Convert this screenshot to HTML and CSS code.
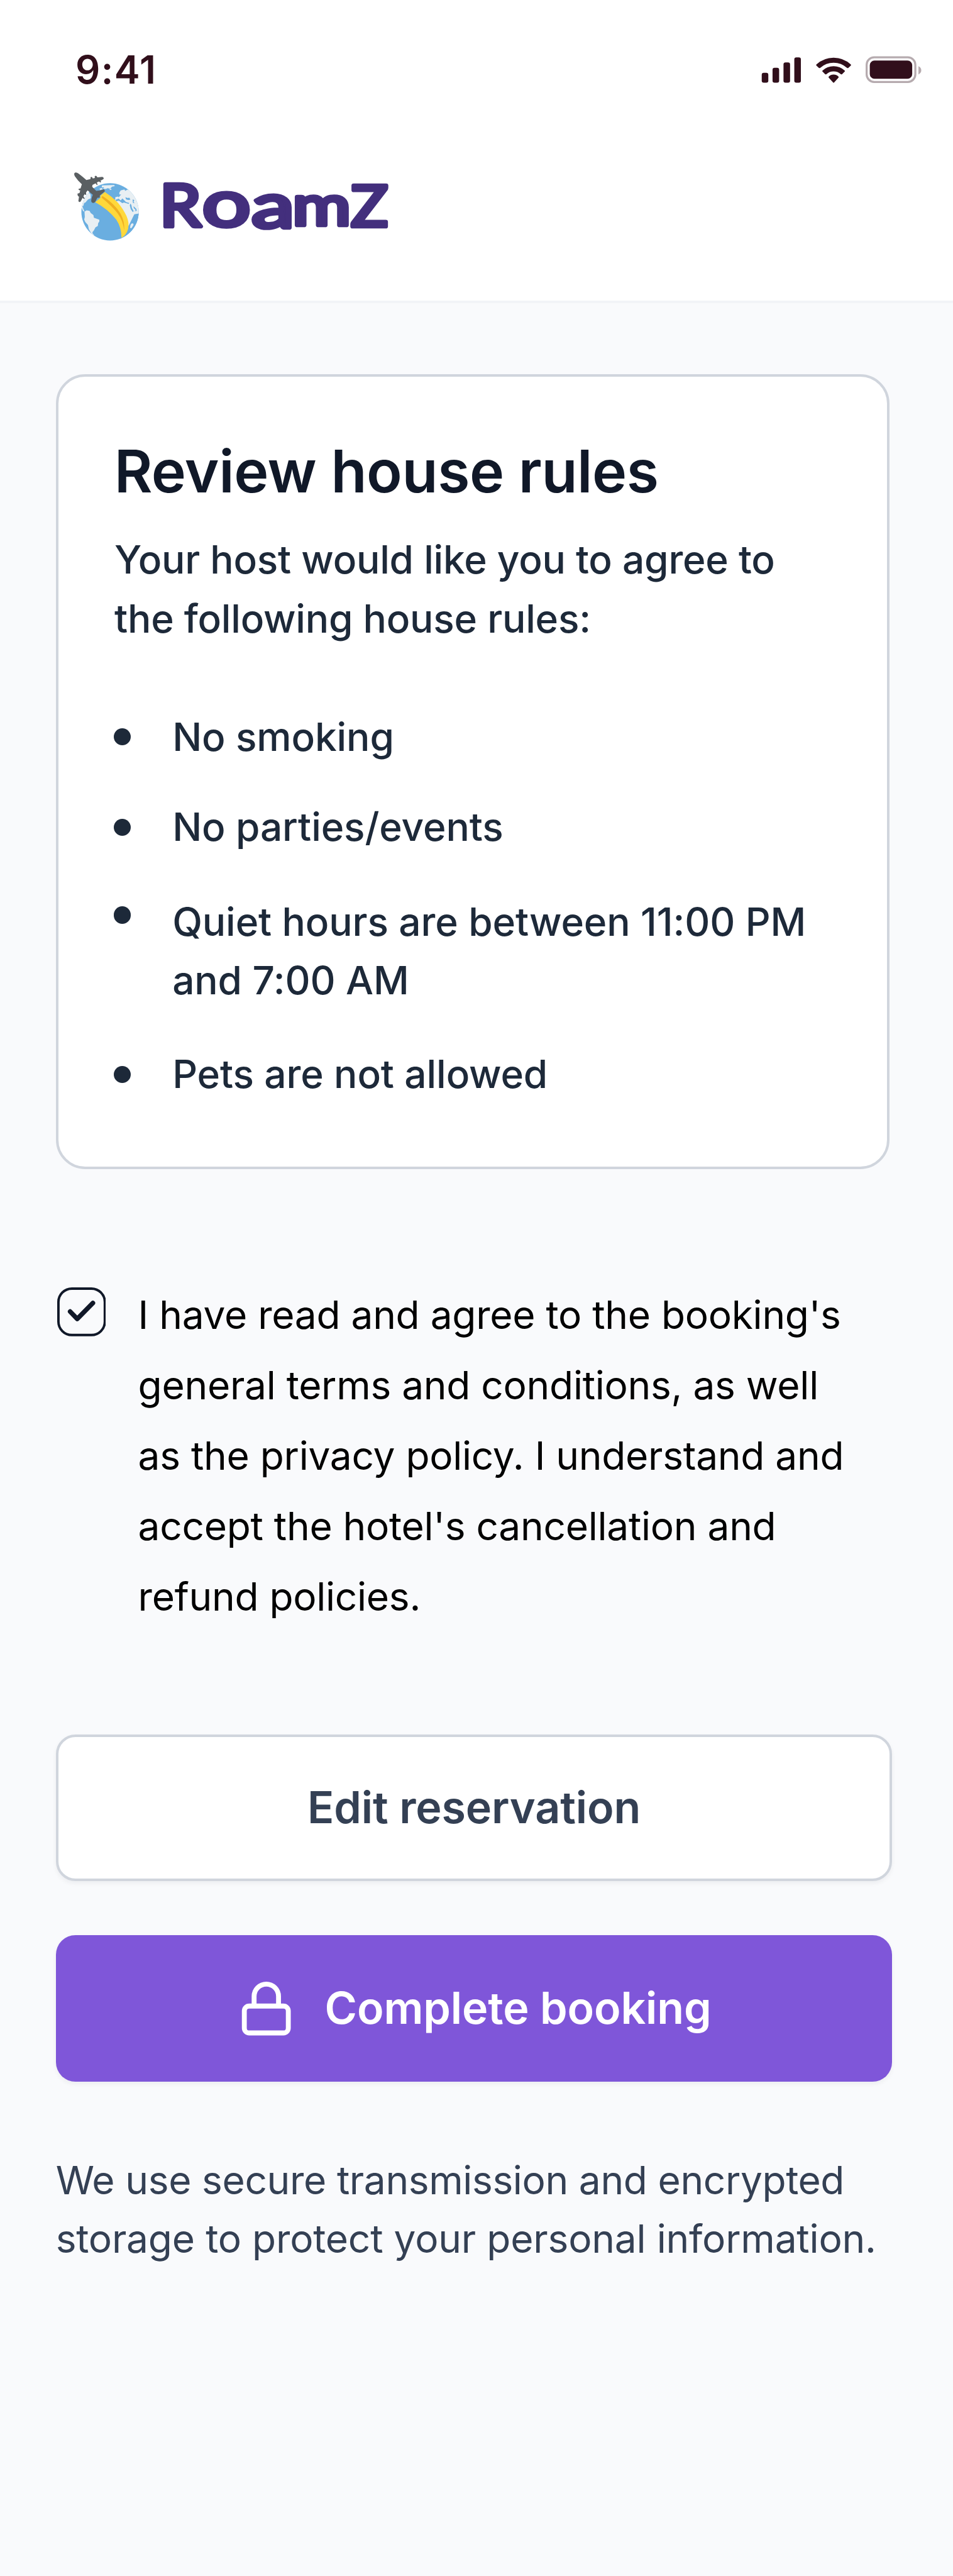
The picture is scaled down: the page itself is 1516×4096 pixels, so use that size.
FILE: index.html
```
<!DOCTYPE html>
<html lang="en">
<head>
<meta charset="utf-8">
<title>RoamZ – Review house rules</title>
<link rel="stylesheet" href="styles.css">
</head>
<body>
<header class="header">
  <div class="status">
    <span class="status-time">9:41</span>
    <svg class="status-icons" viewBox="180 110 1030 190" aria-hidden="true">
      <g fill="#310f1b">
        <rect x="183" y="225" width="42" height="63" rx="13"/>
        <rect x="252" y="193" width="42" height="95" rx="13"/>
        <rect x="322" y="159" width="42" height="129" rx="13"/>
        <rect x="391" y="127" width="42" height="161" rx="13"/>
        <path d="M532 172Q579 129 642 129T752 172Q755 176 752 179L736 194Q732 197 728 194Q691 161 642 161T556 194Q552 197 548 194L532 179Q529 176 532 172Z"/>
        <path d="M571 211Q601 183 642 183T713 211Q716 214 713 217L696 234Q692 237 688 234Q668 216 642 216T596 234Q592 237 588 234L571 217Q568 214 571 211Z"/>
        <path d="M611 249Q624 236 642 236T673 249Q676 253 673 256L645 287Q642 290 639 287L611 256Q608 253 611 249Z"/>
        <rect x="873" y="147" width="271" height="116" rx="30"/>
      </g>
      <rect x="853" y="126.500" width="311" height="157" rx="48" fill="none" stroke="#b6abaf" stroke-width="13"/>
      <path d="M1184 183Q1202 192 1202 209T1184 236Z" fill="#b6abaf"/>
    </svg>
  </div>
  <div class="brand">
    <svg class="brand-globe" viewBox="0 0 510 510" aria-hidden="true">
      <defs><clipPath id="globe"><circle cx="269" cy="300" r="183"/></clipPath></defs>
      <circle cx="269" cy="300" r="183" fill="#6aaee0"/>
      <g clip-path="url(#globe)" fill="#e8eff3">
        <path d="M218 131L296 129L299 136L282 139L270 152L252 149L243 154L225 153L231 143L216 144ZM265 154L276 152L279 158L268 160ZM202 151L216 148L224 156L205 160Z"/>
        <path d="M86 270L90 225L118 160L145 190L146 214L128 222L112 241L104 244L98 263L92 265L101 287L106 298L97 296Z"/>
        <path d="M106 299L119 291L138 294L146 308L163 321L166 338L200 350L201 361L193 373L191 390L176 399L165 420L157 429L158 444L150 438L134 412L128 384L111 365L104 349L108 333Z"/>
        <path d="M154 438L160 440L170 452L160 449Z"/>
        <path d="M328 179L337 163L361 157L366 167L380 158L400 165L430 195L460 260L455 310L432 318L421 326L402 370L388 392L350 300L280 240L288 227L302 222L303 207L321 203L326 213L338 203L348 204L364 226L371 213L391 214L397 223L385 228L396 241L389 248L345 234L326 224L306 229L340 190L329 190Z"/>
      </g>
      <g clip-path="url(#globe)" fill="#6aaee0">
        <path d="M303 224L324 216L337 228L348 215L371 238L392 244L388 250L358 241L347 245L326 230L307 233Z"/>
        <path d="M367 207L379 212L393 211L399 223L385 225L371 221ZM413 221L424 226L419 236L425 246L415 243Z"/>
        <path d="M398 248L405 256L409 276L420 296L414 302L401 283L395 260ZM419 264L437 282L440 294L425 296L433 289L420 276Z"/>
        <path d="M424 316L460 310L450 380L380 470L330 475L388 388L402 360Z"/>
      </g>
      <path d="M404 376L416 373L419 383L406 404L397 403L399 388Z" fill="#e8eff3"/>
      <path d="M236 174L207 198L208 211L174 239Q254 282 309 350Q342 400 342 465L329 473Q373 454 384 410C398 355 365 299 319 242Q281 203 236 174Z" fill="#ffd83b"/>
      <path d="M216 205Q219 197 228 204Q299 251 336 312Q364 363 359 418Q352 357 319 312Q281 263 216 211Z" fill="#efaf22"/>
      <path d="M41 54Q50 43 68 56Q93 75 118 97L144 91L145 79Q154 74 159 87L172 84L171 73Q181 65 188 80L219 77Q231 81 228 90L214 99L209 98L211 112Q204 114 200 106L185 112L190 130Q181 128 177 118L157 128L155 140L181 167Q208 165 228 156Q239 162 234 172L204 196L203 210L188 211L174 238Q160 249 150 237Q146 222 159 192L126 164L116 177L117 193Q108 191 107 188L99 201L108 217Q99 219 94 211L82 234Q71 242 67 231L71 204Q59 199 62 184L74 181L79 163Q67 163 68 153L81 150L89 124Q63 101 45 74Q38 63 41 54Z" fill="#5a5f62"/>
    </svg>
    <svg class="brand-name" viewBox="0 0 510 140" role="img" aria-label="RoamZ">
      <text class="brand-text" y="111.500"><tspan x="9.500" font-size="125" textLength="88" lengthAdjust="spacingAndGlyphs">R</tspan><tspan x="100" font-size="137" textLength="103" lengthAdjust="spacingAndGlyphs">o</tspan><tspan x="205" y="114" font-size="133" textLength="91" lengthAdjust="spacingAndGlyphs">a</tspan><tspan x="292" y="109" font-size="119" textLength="124" lengthAdjust="spacingAndGlyphs">m</tspan><tspan x="416.500" y="111.500" font-size="122" textLength="79" lengthAdjust="spacingAndGlyphs">Z</tspan></text>
    </svg>
  </div>
</header>

<main class="main">
  <section class="card">
    <h1 class="card-title">Review house rules</h1>
    <p class="card-intro">Your host would like you to agree to<br>the following house rules:</p>
    <ul class="rules">
      <li class="rule"><span class="dot"></span><span>No smoking</span></li>
      <li class="rule"><span class="dot"></span><span>No parties/events</span></li>
      <li class="rule rule-long"><span class="dot"></span><span>Quiet hours are between 11:00 PM<br>and 7:00 AM</span></li>
      <li class="rule"><span class="dot"></span><span>Pets are not allowed</span></li>
    </ul>
  </section>

  <div class="consent">
    <svg class="checkbox" viewBox="0 0 20 20" fill="none" stroke="#101828" aria-hidden="true">
      <rect x=".5" y=".5" width="19" height="19" rx="5.500"/>
      <path d="M5.300 9.900L8.200 12.900L14.600 6.400" stroke-width="1.900" stroke-linecap="round" stroke-linejoin="round"/>
    </svg>
    <p class="consent-text">I have read and agree to the booking's<br>general terms and conditions, as well<br>as the privacy policy. I understand and<br>accept the hotel's cancellation and<br>refund policies.</p>
  </div>

  <div class="actions">
    <button class="button button-secondary">Edit reservation</button>
    <button class="button button-primary">
      <svg class="lock" viewBox="0 0 24 24" fill="none" stroke="#fff" stroke-width="2" aria-hidden="true">
        <rect x="3" y="11" width="18" height="11" rx="2"/>
        <path d="M7 11V7a5 5 0 0 1 10 0v4"/>
      </svg>
      <span>Complete booking</span>
    </button>
  </div>

  <p class="note"><span class="note-lead">We use secure transmission and encrypted</span><br>storage to protect your personal information.</p>
</main>
</body>
</html>
```
FILE: styles.css
```
/* 1rem is one design pixel of the 390px-wide layout */
html {
  font-size: 3.88718px;
}

* {
  box-sizing: border-box;
}

body {
  margin: 0;
  min-height: 4096px;
  background: #f9fafc;
  color: #1d2939;
  font-family: Inter, "Liberation Sans", sans-serif;
  font-size: 16rem;
  font-optical-sizing: none;
  line-height: 24rem;
}

h1, p, ul {
  margin: 0;
  padding: 0;
}

.header {
  height: 124rem;
  background: #fff;
  border-bottom: 4px solid #f2f4f7;
}

.status {
  display: flex;
  justify-content: space-between;
  padding: 16.7rem 12.350rem 0 30.900rem;
  height: 67.300rem;
}

.status-time {
  color: #310f1b;
  font-size: 15.800rem;
  font-weight: 600;
  letter-spacing: .350rem;
  line-height: 24rem;
}

.status-icons {
  width: 66rem;
  height: 12.200rem;
  margin-top: 5.700rem;
}

.brand {
  display: flex;
  padding-left: 27.900rem;
}

.brand-globe {
  width: 32.700rem;
  height: 32.700rem;
}

.brand-name {
  width: 98.080rem;
  height: 26.920rem;
  margin: 3.850rem 0 0 2.880rem;
  overflow: visible;
}

.brand-text {
  fill: #432f7d;
  stroke: #432f7d;
  stroke-width: 9px;
  stroke-linejoin: round;
  font-family: Lato, Inter, sans-serif;
  font-weight: 400;
}

.main {
  padding: 29rem 25rem 0 23rem;
}

.card {
  width: 341rem;
  height: 325.200rem;
  padding: 23rem;
  background: #fff;
  border: 4px solid #d0d5dd;
  border-radius: 12rem;
}

.card-title {
  margin-left: -.300rem;
  color: #101828;
  font-size: 24rem;
  font-weight: 600;
  letter-spacing: -.110rem;
  line-height: 32rem;
}

.card-intro {
  margin: 7.900rem 0 0 -.200rem;
  font-weight: 500;
  letter-spacing: -.060rem;
}

.rules {
  display: grid;
  gap: 13rem;
  margin-top: 24.400rem;
  list-style: none;
  font-weight: 500;
  letter-spacing: -.030rem;
}

.rule {
  display: flex;
  gap: 16.900rem;
}

.rule-long {
  margin: 1.600rem 0 1.500rem;
}

.dot {
  flex: none;
  width: 7rem;
  height: 7rem;
  margin: 8.600rem 0 0 -.400rem;
  border-radius: 50%;
  background: #1d2939;
}

.rule-long .dot {
  margin-top: 5.900rem;
}

.consent {
  display: flex;
  gap: 13.200rem;
  margin-top: 45.400rem;
  padding-left: .3rem;
}

.checkbox {
  flex: none;
  width: 20rem;
  height: 20rem;
  margin-top: 3.100rem;
}

.consent-text {
  color: #000;
  letter-spacing: -.070rem;
  line-height: 28.800rem;
}

.actions {
  display: grid;
  gap: 22rem;
  margin-top: 41.900rem;
}

.button {
  display: flex;
  align-items: center;
  justify-content: center;
  gap: 12rem;
  height: 60rem;
  padding: 0;
  border: 0;
  border-radius: 8rem;
  box-shadow: 0 1rem 2rem rgba(16, 24, 40, .05);
  font: 600 18rem/28rem Inter, "Liberation Sans", sans-serif;
  font-optical-sizing: none;
  letter-spacing: -.030rem;
}

.button-secondary {
  border: 4px solid #d0d5dd;
  background: #fff;
  color: #344054;
}

.button-primary {
  background: #7f56d9;
  color: #fff;
}

.lock {
  width: 24rem;
  height: 24rem;
}

.note {
  margin-top: 28.300rem;
  margin-left: -.200rem;
  color: #344054;
  letter-spacing: -.050rem;
  white-space: nowrap;
}

.note-lead {
  letter-spacing: -.100rem;
}
```
